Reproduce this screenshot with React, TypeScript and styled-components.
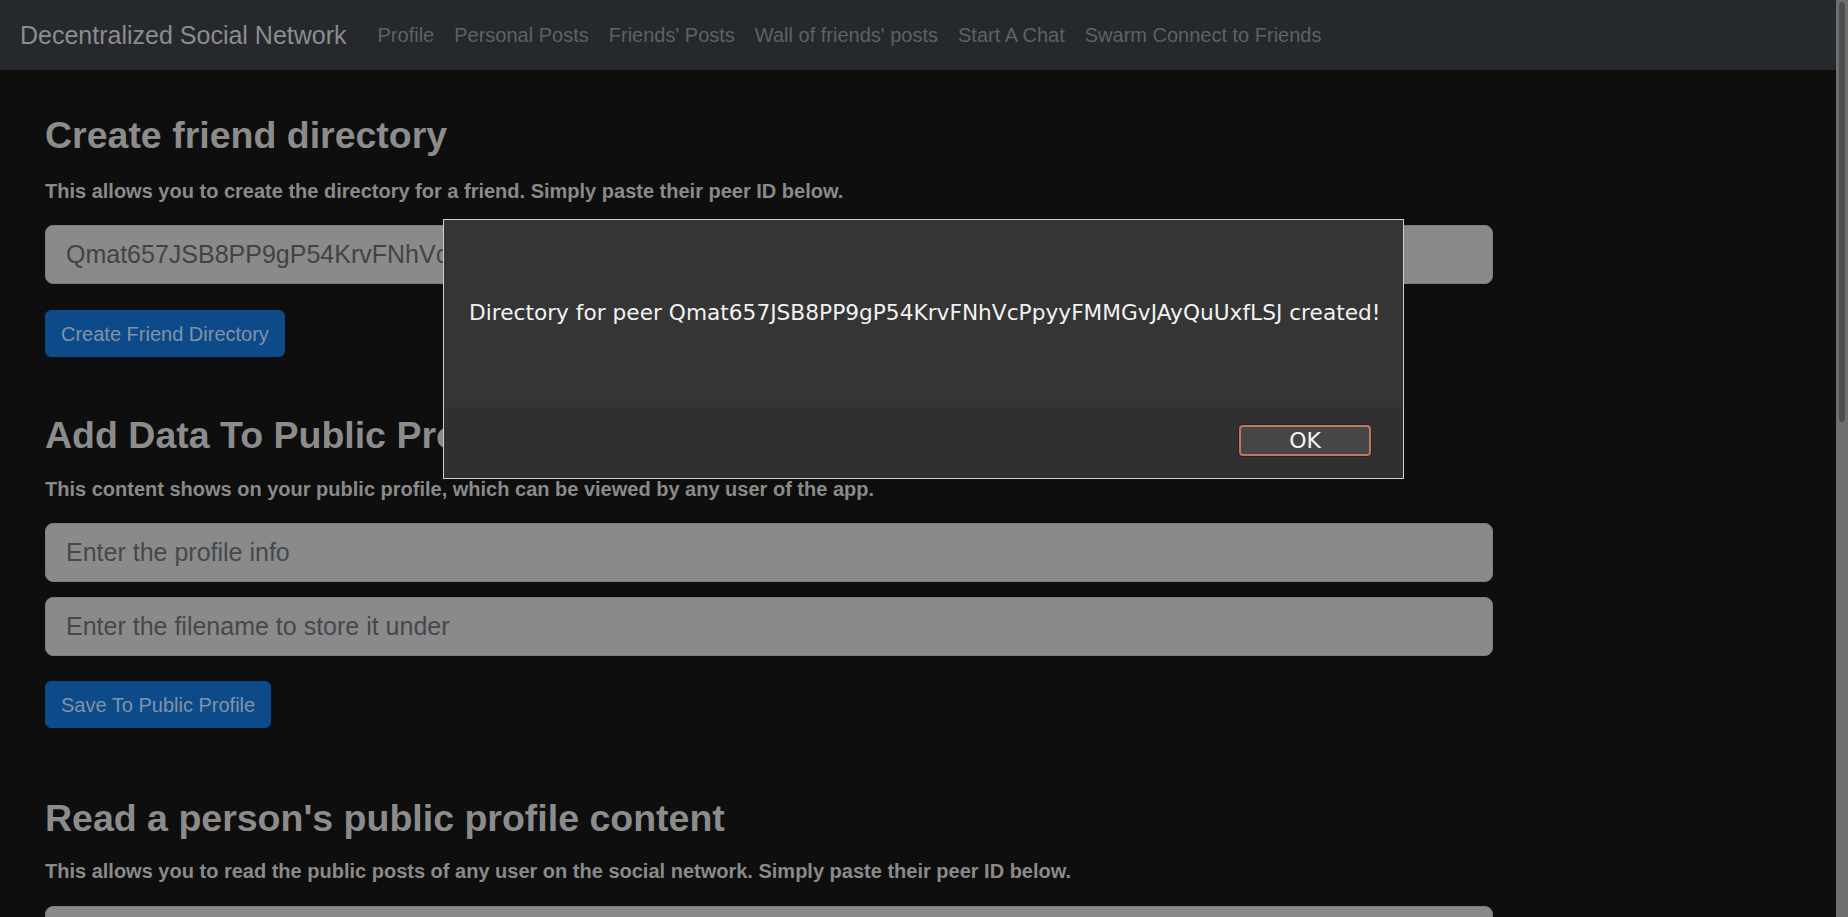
import * as React from 'react';
import styled, { createGlobalStyle } from 'styled-components';

const GlobalStyle = createGlobalStyle`
	html {
		background: #0e0e0e;
	}
	body {
		margin: 0;
		background: #0e0e0e;
		font-family: 'Liberation Sans', Arial, sans-serif;
	}
`;

const Navbar = styled.nav`
	height: 70px;
	box-sizing: border-box;
	background: #25292d;
	display: flex;
	align-items: center;
	padding-left: 20px;
`;

const Brand = styled.div`
	font-size: 25px;
	color: #8c8c8c;
	margin-right: 21px;
	white-space: nowrap;
`;

const NavLink = styled.span`
	font-size: 20px;
	color: #5e6165;
	padding: 0 10px;
	white-space: nowrap;
`;

const Main = styled.main`
	padding: 0 0 0 45px;
	min-height: 1923px;
	box-sizing: border-box;
`;

const Heading = styled.h3<{ $top: number }>`
	margin: ${(p) => p.$top}px 0 0;
	font-size: 37.5px;
	line-height: 42px;
	font-weight: 700;
	color: #8c8c8c;
`;

const Lead = styled.p<{ $top: number }>`
	margin: ${(p) => p.$top}px 0 0;
	font-size: 20px;
	line-height: 30px;
	font-weight: 700;
	color: #8a8a8a;
`;

const Input = styled.input<{ $top: number }>`
	display: block;
	margin: ${(p) => p.$top}px 0 0;
	width: 1448px;
	height: 59px;
	box-sizing: border-box;
	padding: 10px 20px;
	font-family: 'Liberation Sans', Arial, sans-serif;
	font-size: 25px;
	color: #404347;
	background: #8a8a8a;
	border: 1px solid #7e7e7e;
	border-radius: 8px;
	outline: none;

	&::placeholder {
		color: #45484c;
	}
`;

const Button = styled.button<{ $top: number }>`
	display: block;
	margin: ${(p) => p.$top}px 0 0;
	height: 47px;
	box-sizing: border-box;
	padding: 7px 15px;
	font-family: 'Liberation Sans', Arial, sans-serif;
	font-size: 20px;
	line-height: 30px;
	color: #8292a6;
	background: #0d4a8a;
	border: 1px solid #0d4a8a;
	border-radius: 6px;
`;

/* the browser scrollbar, dimmed along with the page behind the alert */
const ScrollTrack = styled.div`
	position: fixed;
	top: 0;
	right: 0;
	width: 12px;
	height: 100vh;
	background: #6e6e6e;
`;

const ScrollThumb = styled.div`
	position: absolute;
	top: 2px;
	left: 3px;
	width: 6px;
	height: 420px;
	border-radius: 3px;
	background: #4e4e4e;
`;

const Dialog = styled.div`
	position: fixed;
	left: 443px;
	top: 219px;
	width: 961px;
	height: 260px;
	box-sizing: border-box;
	border: 1px solid #cfcfcf;
	background: #353535;
	display: flex;
	flex-direction: column;
	font-family: 'DejaVu Sans', sans-serif;
`;

const DialogBody = styled.div`
	height: 187px;
	box-sizing: border-box;
	padding: 80px 0 0 25px;
	font-size: 21.7px;
	line-height: 26px;
	color: #f2f2f2;
	white-space: nowrap;
`;

const DialogFooter = styled.div`
	flex: 1;
	background: #303030;
	display: flex;
	justify-content: flex-end;
	align-items: flex-start;
	padding: 18px 32px 0 0;
`;

const OkButton = styled.button`
	width: 132px;
	height: 31px;
	box-sizing: border-box;
	background: #464646;
	border: 2px solid #c0775a;
	border-radius: 4px;
	box-shadow: 0 0 0 1px #232323;
	color: #f4f4f4;
	font-family: 'DejaVu Sans', sans-serif;
	font-size: 22px;
	line-height: 26px;
	padding: 0;
`;

const links = ['Profile', 'Personal Posts', "Friends' Posts", "Wall of friends' posts", 'Start A Chat', 'Swarm Connect to Friends'];

export default function App() {
	return (
		<>
			<GlobalStyle />
			<Navbar>
				<Brand>Decentralized Social Network</Brand>
				{links.map((link) => <NavLink key={link}>{link}</NavLink>)}
			</Navbar>
			<Main>
				<Heading $top={44}>Create friend directory</Heading>
				<Lead $top={20}>This allows you to create the directory for a friend. Simply paste their peer ID below.</Lead>
				<Input $top={19} defaultValue="Qmat657JSB8PP9gP54KrvFNhVcPpyyFMMGvJAyQuUxfLSJ" />
				<Button $top={26}>Create Friend Directory</Button>

				<Heading $top={57}>Add Data To Public Profile</Heading>
				<Lead $top={18}>This content shows on your public profile, which can be viewed by any user of the app.</Lead>
				<Input $top={19} placeholder="Enter the profile info" />
				<Input $top={15} placeholder="Enter the filename to store it under" />
				<Button $top={25}>Save To Public Profile</Button>

				<Heading $top={69}>Read a person's public profile content</Heading>
				<Lead $top={17}>This allows you to read the public posts of any user on the social network. Simply paste their peer ID below.</Lead>
				<Input $top={20} />
			</Main>
			<ScrollTrack>
				<ScrollThumb />
			</ScrollTrack>
			<Dialog>
				<DialogBody>Directory for peer Qmat657JSB8PP9gP54KrvFNhVcPpyyFMMGvJAyQuUxfLSJ created!</DialogBody>
				<DialogFooter>
					<OkButton>OK</OkButton>
				</DialogFooter>
			</Dialog>
		</>
	);
}
